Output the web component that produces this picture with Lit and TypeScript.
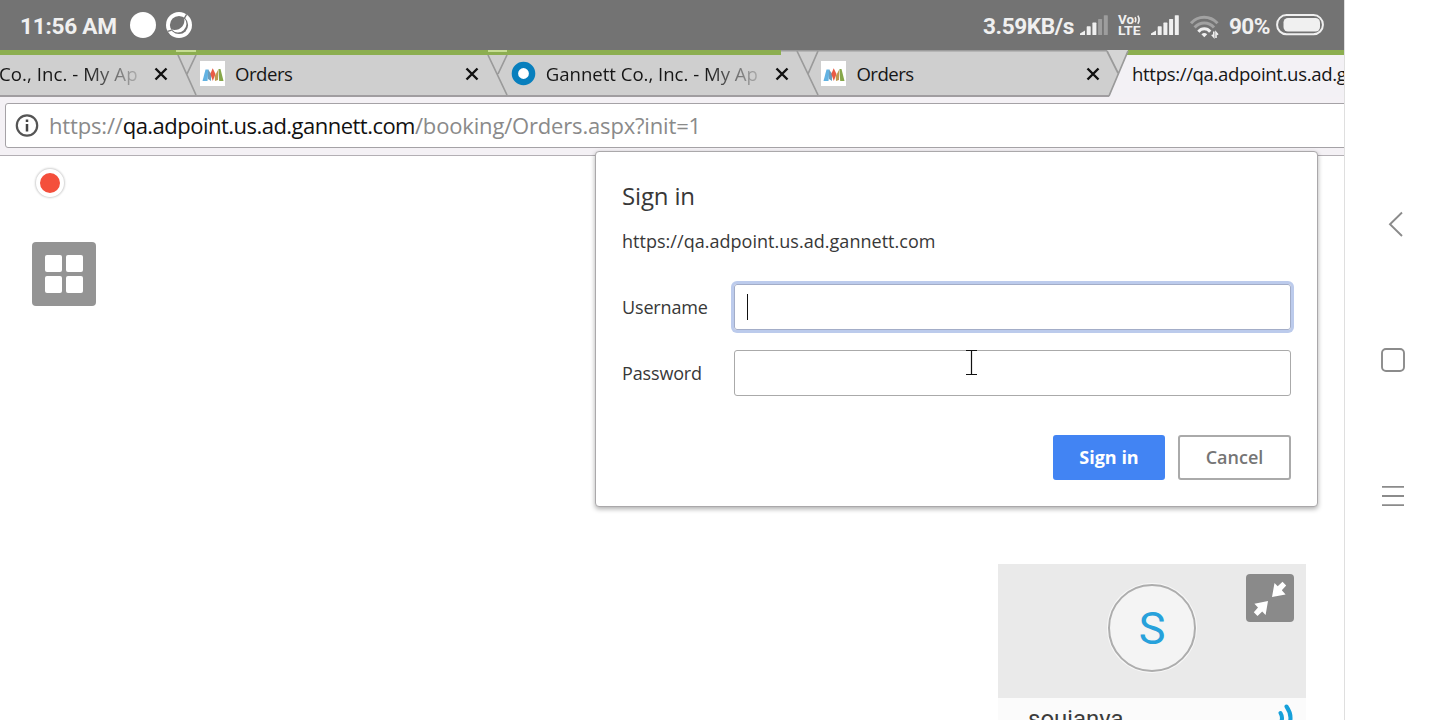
import { LitElement, html, css, svg, nothing } from "lit";
import { customElement, property } from "lit/decorators.js";

interface Tab {
  title: string;
  icon: "chart" | "ring" | "none";
  kind: string;
}

const TABS: Tab[] = [
  { title: "Co., Inc. - My Ap", icon: "none", kind: "first fade" },
  { title: "Orders", icon: "chart", kind: "short" },
  { title: "Gannett Co., Inc. - My Ap", icon: "ring", kind: "fade" },
  { title: "Orders", icon: "chart", kind: "short" },
  { title: "https://qa.adpoint.us.ad.gannett.com", icon: "none", kind: "active" },
];

@customElement("status-bar")
class StatusBar extends LitElement {
  static styles = css`
    :host { display: flex; align-items: center; height: 50px; box-sizing: border-box; padding: 0 20px 0 20px; background: #737373; color: #f0f0f0; font: 700 22.6px/50px Roboto, sans-serif; }
    svg { display: block; flex: none; overflow: visible; }
    .time { width: 110px; padding-top: 3px; line-height: 47px; white-space: nowrap; letter-spacing: -.25px; }
    .circle { width: 26px; height: 26px; border-radius: 50%; background: #fff; }
    .ring { margin-left: 10px; }
    .rate { width: 92px; margin-left: auto; padding-top: 3px; line-height: 47px; white-space: nowrap; letter-spacing: -.4px; }
    .sig1 { margin-left: 5px; margin-top: 0; }
    .lte { margin-left: 10px; width: 23px; }
    .sig2 { margin-left: 10px; margin-top: 0; }
    .wifi { margin-left: 11px; margin-top: 4px; }
    .pct { width: 42px; margin-left: 10px; padding-top: 3px; line-height: 47px; white-space: nowrap; letter-spacing: -.6px; }
    .batt { margin-left: 5px; margin-top: -1px; }
    .volte { font: 700 12px Roboto, sans-serif; fill: #f0f0f0; }
  `;
  private bars(lit: number) {
    return svg`${[0, 1, 2, 3, 4].map((i) => i === 0
      ? svg`<path d="M0 20 V18.5 L5 15.5 V20 Z" fill="#f0f0f0"/>`
      : svg`<rect x=${1 + i * 5.7} y=${15 - i * 3.7} width="4" height=${5 + i * 3.7} rx=".6" fill=${i < lit ? "#f0f0f0" : "#9d9d9d"}/>`)}`;
  }
  render() {
    return html`
      <div class="time">11:56 AM</div>
      <div class="circle"></div>
      <svg class="ring" width="26" height="26" viewBox="0 0 26 26">
        <circle cx="13" cy="13" r="13" fill="#fff"/>
        <circle cx="13" cy="13" r="9.1" fill="#737373"/>
        <path d="M18.3 6.2 A8.2 8.2 0 1 1 5.6 17.6 C13 19.5 19.5 14 18.3 6.2Z" fill="#fff"/>
        <path d="M20.6 2.4 L18.2 6.6 M5.8 18.2 L1.6 19.4" stroke="#737373" stroke-width="1.3"/>
      </svg>
      <div class="rate">3.59KB/s</div>
      <svg class="sig1" width="28" height="20" viewBox="0 0 28 20">${this.bars(3)}</svg>
      <svg class="lte" width="23" height="22" viewBox="0 0 23 22">
        <text class="volte" x="0" y="9.6" textLength="16" lengthAdjust="spacingAndGlyphs">Vo</text>
        <path d="M17 3.2 Q18.6 5.7 17 8.2 M19.8 1.6 Q22.4 5.7 19.8 9.8" fill="none" stroke="#f0f0f0" stroke-width="1.6"/>
        <text class="volte" x="0" y="21.2" textLength="22.5" lengthAdjust="spacingAndGlyphs">LTE</text>
      </svg>
      <svg class="sig2" width="28" height="20" viewBox="0 0 28 20">${this.bars(5)}</svg>
      <svg class="wifi" width="29" height="24" viewBox="0 0 29 24">
        <g fill="none" stroke-width="3">
          <path d="M1 8.3 C8 .3 20 .3 27.5 8.3" stroke="#a2a2a2"/>
          <path d="M4.6 12.6 C10 6.6 18.6 6.6 24 12.6" stroke="#a2a2a2"/>
          <path d="M8.4 16.7 C11.6 12.9 17 12.9 20.2 16.7" stroke="#f0f0f0"/>
        </g>
        <path d="M11.4 19.2 Q14.3 16.8 17.2 19.2 L14.3 22.2Z" fill="#f0f0f0"/>
        <path d="M23.8 16.5 V22 L21.8 19.8 M26 23 V17.5 L28 19.8" fill="none" stroke="#f0f0f0" stroke-width="1.6"/>
      </svg>
      <div class="pct">90%</div>
      <svg class="batt" width="48" height="22" viewBox="0 0 48 22">
        <rect x="1.1" y="1.1" width="45.8" height="19.2" rx="9.4" fill="none" stroke="#f0f0f0" stroke-width="2"/>
        <rect x="7.5" y="4" width="36.5" height="13.5" rx="4.5" fill="#f0f0f0"/>
      </svg>`;
  }
}

@customElement("tab-strip")
class TabStrip extends LitElement {
  static styles = css`
    :host { display: block; position: relative; height: 47px; overflow: hidden; background: #cfcfcf; }
    .shape { position: absolute; inset: 0; }
    .tabs { position: relative; display: flex; height: 47px; }
    .tab { flex: none; box-sizing: border-box; width: 310.7px; display: flex; align-items: center; padding: 0 19px 0 14px; font: 18.6px/48px "Open Sans", sans-serif; color: #161616; }
    .tab.first { width: 187px; padding-left: 0; }
    .tab.active { width: 226px; padding: 0 0 0 13px; }
    .label { flex: 1; overflow: hidden; white-space: nowrap; letter-spacing: -.02px; }
    .short .label { letter-spacing: -.5px; }
    .first .label { text-indent: -1px; letter-spacing: .07px; }
    .active .label { letter-spacing: -.36px; }
    .fade .label { -webkit-mask-image: linear-gradient(90deg, #000 0, #000 calc(100% - 70px), rgba(0,0,0,.2) calc(100% - 18px)); }
    .icon { width: 25px; height: 25px; margin-left: -1px; margin-right: 10px; }
    .ring { margin-right: 10px; }
    svg { display: block; flex: none; }
  `;
  private icon(kind: Tab["icon"]) {
    if (kind === "chart") return html`<svg class="icon" viewBox="0 0 25 25">
      <rect width="25" height="25" fill="#fff"/>
      <path d="M2.5 20 L5.5 8.5 H8.5 L7.5 20Z" fill="#62b2e2"/><path d="M8 8.5 L11 12.5 V20 L8 18Z" fill="#6c9dbb"/>
      <path d="M10.3 13 L12.7 7.3 L15.5 13 L12.8 20Z" fill="#e95b45"/>
      <path d="M18.5 8 H20.5 L23.5 20 H19.2Z" fill="#86a74a"/><path d="M14.7 15 L18.3 8.5 L18 19 L15 20Z" fill="#c09a52"/></svg>`;
    if (kind === "ring") return html`<svg class="icon ring" viewBox="0 0 25 25">
      <circle cx="12.5" cy="12.5" r="8.6" fill="#fff" stroke="#087fbd" stroke-width="6.4"/></svg>`;
    return nothing;
  }
  render() {
    return html`
      <svg class="shape" width="1344" height="47" viewBox="0 0 1344 47">
        <rect y="45" width="1344" height="2" fill="#a09da0"/>
        <path d="M0 0H781V5H0Z" fill="#8cae50"/>
        <path d="M176 0H196V2H176ZM488 0H507V2H488Z" fill="#c6dd93"/>
        <path d="M781 .8H1107" stroke="#9c9c9c" stroke-width="1.4"/>
        <path d="M1107 0H1128L1118 23Z" fill="#d5d5d5"/>
        <path d="M1128 0H1344V47H1109Z" fill="#f3f1f5"/>
        <path d="M1128 0H1344V5H1126Z" fill="#8cae50"/>
        <g fill="none" stroke="#9a9a9a" stroke-width="1.7">
          <path d="M178 5L196 45M196 5L187 24"/>
          <path d="M488 5L507 45M507 5L498 24"/>
          <path d="M797 1L818 45M808 24L818 1"/>
          <path d="M1107 1L1118 23M1128 1L1109 46"/>
        </g>
      </svg>
      <div class="tabs">
        ${TABS.map((t) => html`<div class="tab ${t.kind}">
          ${this.icon(t.icon)}
          <span class="label">${t.title}</span>
          ${t.kind === "active" ? nothing : html`<svg width="14" height="14" viewBox="0 0 14 14"><path d="M1.5 1.5L12.5 12.5M12.5 1.5L1.5 12.5" stroke="#111" stroke-width="2.4"/></svg>`}
        </div>`)}
      </div>`;
  }
}

@customElement("sign-in-dialog")
class SignInDialog extends LitElement {
  static styles = css`
    :host { display: flex; flex-direction: column; box-sizing: border-box; width: 723px; height: 356px; padding: 29px 26px 27px 26px; background: #fff; border: 1px solid #aaa8aa; border-radius: 4px; box-shadow: 0 2px 5px rgba(0,0,0,.32); font-family: "Open Sans", sans-serif; font-size: 18px; color: #383838; }
    .title { font-size: 24px; line-height: 30px; letter-spacing: -.15px; }
    .origin { margin-top: 16px; line-height: 28px; white-space: nowrap; letter-spacing: .03px; }
    .row { display: flex; align-items: center; height: 46px; margin-top: 20px; }
    .row.first { margin-top: 29px; }
    .label { width: 112px; letter-spacing: -.15px; }
    .field { flex: 1; height: 46px; box-sizing: border-box; border: 1.5px solid #aaa; border-radius: 3px; display: flex; align-items: center; padding-left: 12px; }
    .field.focus { border-color: #a3adc8; box-shadow: 0 0 0 3px #bccbec; }
    .caret { width: 1px; height: 26px; background: #111; }
    .actions { display: flex; justify-content: flex-end; gap: 13px; margin-top: 39px; }
    .btn { box-sizing: border-box; width: 113px; height: 45px; border: 2px solid #aaa; border-radius: 3px; line-height: 41px; text-align: center; color: #757575; font-weight: 600; }
    .primary { width: 112px; color: #fff; background: #4284f3; border-color: #4284f3; font-weight: 700; }
  `;
  render() {
    return html`
      <div class="title">Sign in</div>
      <div class="origin">https://qa.adpoint.us.ad.gannett.com</div>
      <div class="row first"><div class="label">Username</div><div class="field focus"><div class="caret"></div></div></div>
      <div class="row"><div class="label">Password</div><div class="field"></div></div>
      <div class="actions"><div class="btn primary">Sign in</div><div class="btn">Cancel</div></div>`;
  }
}

@customElement("participant-card")
class ParticipantCard extends LitElement {
  @property() name = "";
  static styles = css`
    :host { display: block; width: 308px; height: 156px; overflow: hidden; background: #fbfbfb; font-family: Roboto, sans-serif; }
    .video { position: relative; display: flex; justify-content: center; height: 134px; box-sizing: border-box; padding-top: 20px; background: #eaeaea; }
    .avatar { box-sizing: border-box; width: 88px; height: 88px; border: 2px solid #adadad; box-shadow: 0 0 0 1px #f8f8f8; border-radius: 50%; background: #f4f4f4; color: #27a1db; font-size: 45px; line-height: 86px; text-align: center; }
    .shrink { position: absolute; right: 12px; top: 10px; width: 48px; height: 48px; border-radius: 4px; background: #8a8a8a; }
    .info { display: flex; justify-content: space-between; padding: 6px 12px 0 30px; }
    .name { color: #3c3c3c; font-size: 24px; line-height: 30px; }
    svg { display: block; }
  `;
  render() {
    return html`
      <div class="video">
        <div class="avatar">S</div>
        <svg class="shrink" viewBox="0 0 48 48"><g fill="#fff">
          <path d="M26 23 L28.5 9 L31.7 12.2 L36.5 7.8 L40.2 11.5 L35.8 16.2 L39.6 20.4Z"/>
          <path d="M22 27 L8.4 29.8 L12 33.5 L7.8 38.2 L11.5 42 L16.2 37.6 L19.6 41Z"/></g></svg>
      </div>
      <div class="info"><span class="name">${this.name}</span>
        <svg width="16" height="36" viewBox="0 0 16 36" fill="none" stroke="#16a0da" stroke-width="4" stroke-linecap="round">
          <path d="M2.5 9 Q5.5 14 2.5 19"/><path d="M8.5 2.5 Q16.5 14 8.5 25"/></svg></div>`;
  }
}

@customElement("app-root")
class AppRoot extends LitElement {
  static styles = css`
    :host { display: flex; width: 1440px; height: 720px; overflow: hidden; background: #fff; }
    .screen { position: relative; width: 1344px; height: 720px; overflow: hidden; }
    .toolbar { height: 59px; box-sizing: border-box; padding: 6px 0 0 5px; background: #f4f1f5; border-bottom: 1.5px solid #b3afb4; }
    .address { display: flex; align-items: center; box-sizing: border-box; width: 1345px; height: 45px; padding-left: 9px; background: #fff; border: 1.5px solid #a5a2a6; border-radius: 3px; font: 22px/43px "Open Sans", sans-serif; color: #8a8a8a; white-space: nowrap; }
    .address svg { margin-right: 10px; }
    .url { letter-spacing: -.17px; padding-bottom: 1px; }
    .host { color: #111; letter-spacing: -.52px; }
    .page { display: flex; flex-direction: column; gap: 45.5px; padding: 12.5px 32px; }
    .record { width: 28px; height: 28px; margin-left: 4px; box-sizing: border-box; border: 4px solid #fff; border-radius: 50%; background: #f44f3c; box-shadow: 0 0 2px 1px #d0d0d0; }
    .grid { display: grid; grid-template-columns: 17px 17px; gap: 4px; place-content: center; width: 64px; height: 64px; border-radius: 4px; background: #949494; }
    .cell { height: 17px; border-radius: 2px; background: #fff; }
    .dialog { position: absolute; left: 595px; top: 151px; }
    .card { position: absolute; left: 998px; top: 564px; }
    .ibeam { position: absolute; left: 966px; top: 350px; }
    .nav { box-sizing: border-box; width: 96px; display: flex; flex-direction: column; align-items: center; padding-top: 211px; gap: 110px; border-left: 1px solid #dfdfdf; fill: none; stroke: #8b8b8b; stroke-width: 1.9; }
    .nav svg { display: block; }
    svg { flex: none; }
  `;
  render() {
    return html`
      <div class="screen">
        <status-bar></status-bar>
        <tab-strip></tab-strip>
        <div class="toolbar"><div class="address">
          <svg width="24" height="24" viewBox="0 0 24 24"><circle cx="12" cy="11.5" r="10.2" fill="none" stroke="#555" stroke-width="2.2"/><path d="M12 5.5V8M12 10V17.5" stroke="#444" stroke-width="2.5"/></svg>
          <span class="url">https://<span class="host">qa.adpoint.us.ad.gannett.com</span>/booking/Orders.aspx?init=1</span>
        </div></div>
        <div class="page">
          <div class="record"></div>
          <div class="grid"><div class="cell"></div><div class="cell"></div><div class="cell"></div><div class="cell"></div></div>
        </div>
        <sign-in-dialog class="dialog"></sign-in-dialog>
        <svg class="ibeam" width="11" height="26" viewBox="0 0 11 26"><path d="M0 .5H11M0 24.5H11M5.5 0V25" stroke="#111" stroke-width="1.2"/></svg>
        <participant-card class="card" name="soujanya"></participant-card>
      </div>
      <div class="nav">
        <svg width="26" height="26" viewBox="0 0 26 26"><path d="M22 1.5L10 13.2L22 25"/></svg>
        <svg width="26" height="26" viewBox="0 0 26 26"><rect x="2" y="2" width="22" height="22" rx="4"/></svg>
        <svg width="26" height="26" viewBox="0 0 26 26"><path d="M2 3.9H24M2 13H24M2 22.1H24"/></svg>
      </div>`;
  }
}
